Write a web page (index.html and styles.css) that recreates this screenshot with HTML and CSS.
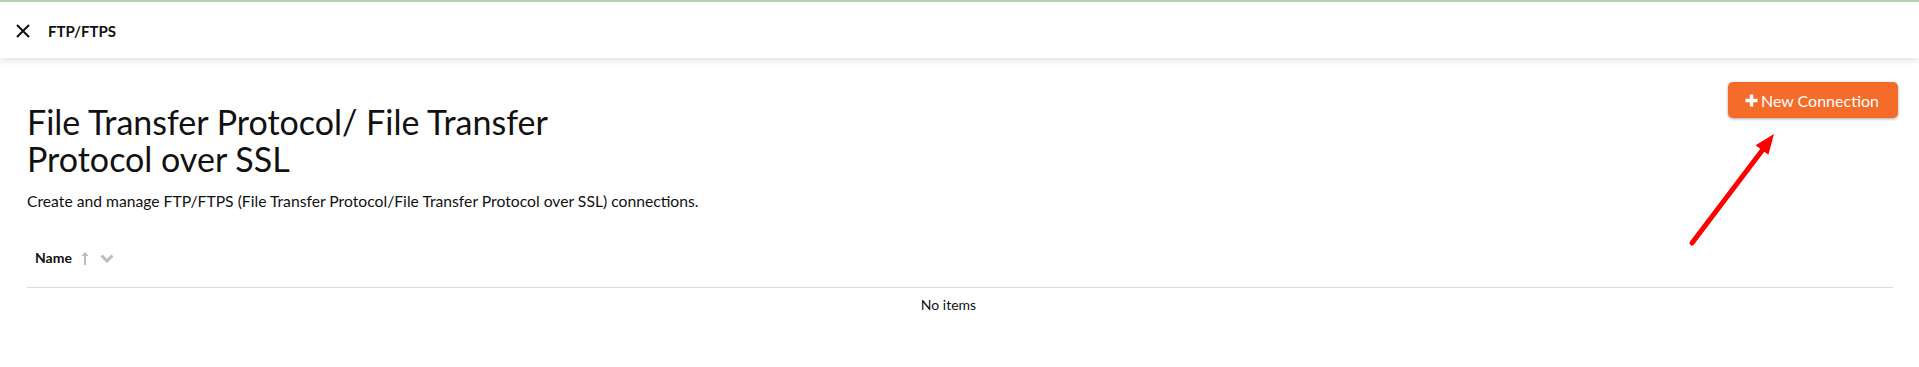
FILE: index.html
```html
<!DOCTYPE html>
<html lang="en">
<head>
    <meta charset="UTF-8">
    <meta name="viewport" content="width=device-width, initial-scale=1.0">
    <title>FTP/FTPS</title>
    <link rel="stylesheet" href="styles.css">
</head>
<body>
    <div class="topbar">
        <svg class="close" width="14" height="14" viewBox="0 0 14 14">
            <path d="M1 1L13 13M13 1L1 13" stroke="#111" stroke-width="2" fill="none"/>
        </svg>
        <span class="topbar-title">FTP/FTPS</span>
    </div>

    <div class="page">
        <div class="head">
            <div class="head-text">
                <h1>File Transfer Protocol/ File Transfer Protocol over SSL</h1>
                <p class="desc">Create and manage FTP/FTPS (File Transfer Protocol/File Transfer Protocol over SSL) connections.</p>
            </div>
            <button class="btn-new">
                <svg width="13" height="13" viewBox="0 0 13 13">
                    <path d="M6.5 0.5V12.5M0.5 6.5H12.5" stroke="#fff" stroke-width="3.4" fill="none"/>
                </svg>
                <span>New Connection</span>
            </button>
        </div>

        <table class="list">
            <thead>
                <tr>
                    <th>
                        <div class="th-inner">
                            <span>Name</span>
                            <svg class="sort-up" width="8" height="15" viewBox="0 0 8 15">
                                <path d="M4 14V2" stroke="#bdbdbd" stroke-width="2" fill="none"/>
                                <path d="M0.5 5L4 1L7.5 5Z" fill="#bdbdbd"/>
                            </svg>
                            <svg class="chev" width="14" height="9" viewBox="0 0 14 9">
                                <path d="M1.5 1.5L7 7L12.5 1.5" stroke="#bdbdbd" stroke-width="3" fill="none"/>
                            </svg>
                        </div>
                    </th>
                </tr>
            </thead>
            <tbody>
                <tr>
                    <td class="empty">No items</td>
                </tr>
            </tbody>
        </table>
    </div>

    <svg class="pointer" width="1919" height="367" viewBox="0 0 1919 367">
        <line x1="1692" y1="243" x2="1764" y2="148" stroke="#ff0000" stroke-width="5" stroke-linecap="round"/>
        <polygon points="1774,134 1768.4,154.8 1755.6,145.2" fill="#ff0000"/>
    </svg>
</body>
</html>
```

FILE: styles.css
```css
body{
    margin: 0;
    padding: 0;
    font-family: Lato, "Open Sans", sans-serif;
    color: #111;
    background: #fff;
}
.topbar{
    display: flex;
    align-items: center;
    box-sizing: border-box;
    height: 58px;
    padding: 2px 0 0 16px;
    border-top: 2px solid #afd5a9;
    background: #fff;
    box-shadow: 0 3px 6px rgba(0, 0, 0, 0.10);
}
.close{
    margin-right: 18px;
}
.topbar-title{
    font-size: 15px;
    font-weight: 700;
}
.page{
    padding: 24px 26px 0 27px;
}
.head{
    display: flex;
    justify-content: space-between;
    align-items: flex-start;
}
.head-text h1{
    width: 600px;
    margin: 21px 0 0 0;
    font-size: 34px;
    font-weight: 400;
    line-height: 37px;
}
.desc{
    margin: 14px 0 0 0;
    font-size: 15.7px;
    line-height: 20px;
}
.btn-new{
    display: flex;
    align-items: center;
    gap: 3px;
    height: 36px;
    margin-right: -5px;
    padding: 0 19px 0 17px;
    border: none;
    border-radius: 5px;
    background: #f46b2a;
    color: #fff;
    font-family: Lato, sans-serif;
    font-size: 16px;
    box-shadow: 0 1px 3px rgba(0, 0, 0, 0.35);
    cursor: pointer;
}
.list{
    width: 100%;
    margin-top: 24px;
    border-collapse: collapse;
}
.list th{
    padding: 13px 8px 19px 8px;
    text-align: left;
    border-bottom: 1px solid #dcdcdc;
}
.th-inner{
    display: flex;
    align-items: center;
    font-size: 14px;
    font-weight: 700;
    line-height: 20px;
}
.sort-up{
    margin-left: 9px;
}
.chev{
    margin-left: 11px;
}
.empty{
    padding: 7px 23px 6px 0;
    text-align: center;
    font-size: 14px;
    line-height: 20px;
}
.pointer{
    position: absolute;
    top: 0;
    left: 0;
    pointer-events: none;
}
```
